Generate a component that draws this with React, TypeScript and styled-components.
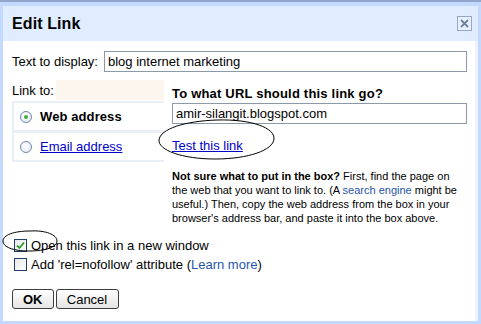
import React from 'react'
import styled, { createGlobalStyle } from 'styled-components'

const Global = createGlobalStyle`
  html, body { margin: 0; padding: 0; }
  body {
    font-family: 'Liberation Sans', Arial, sans-serif;
    font-size: 13px;
    color: #000;
    background: #c3d9ff;
  }
`

const Page = styled.div`
  width: 481px;
  height: 324px;
  box-sizing: border-box;
  background: #c3d9ff;
  border-top: 2px solid #8fa6c9;
  padding: 4px 4px 3px 3px;
  display: flex;
`

const Dialog = styled.div`
  flex: 1;
  display: flex;
  flex-direction: column;
  background: #fff;
  position: relative;
`

const TitleBar = styled.div`
  height: 35px;
  background: #e0ecff;
  display: flex;
  align-items: center;
  justify-content: space-between;
  padding: 0 6px 0 9px;
`

const Title = styled.h1`
  margin: 0;
  font-size: 16px;
  font-weight: bold;
  letter-spacing: 0.1px;
`

const CloseBox = styled.div`
  width: 13px;
  height: 13px;
  border: 1px solid #94a9c9;
  background: #e8f0ff;
  display: flex;
  align-items: center;
  justify-content: center;
`

const Body = styled.div`
  flex: 1;
  padding: 10px 8px 0 9px;
  border-right: 3px solid #edf3ff;
  position: relative;
`

const FieldRow = styled.div`
  display: flex;
  align-items: center;
  gap: 6px;
`

const Label = styled.span`
  white-space: nowrap;
`

const TextInput = styled.div<{ w: number; gapTop?: number }>`
  width: ${p => p.w}px;
  height: 21px;
  margin-top: ${p => p.gapTop ?? 0}px;
  box-sizing: border-box;
  border: 1px solid #8c9aa8;
  padding: 0 3px;
  display: flex;
  align-items: center;
  font-size: 13px;
  background: #fff;
`

const LinkSection = styled.div`
  display: grid;
  grid-template-columns: 152px 1fr;
  column-gap: 8px;
  margin-top: 8px;
`

const LeftCol = styled.div`
  display: flex;
  flex-direction: column;
`

const LinkHead = styled.div`
  display: flex;
  height: 20px;
  align-items: center;
`

const Peach = styled.div`
  flex: 1;
  align-self: stretch;
  margin-left: 2px;
  background: #fdf6ef;
`

const TabPanel = styled.div`
  display: flex;
  flex-direction: column;
  gap: 3px;
  background: #eaeff7;
  padding: 2px 0 2px 2px;
  margin-top: 1px;
`

const TabRow = styled.div`
  height: 27px;
  background: #fff;
  display: flex;
  align-items: center;
  gap: 8px;
  padding-left: 6px;
`

const Radio = styled.span<{ on?: boolean }>`
  width: 12px;
  height: 12px;
  box-sizing: border-box;
  border-radius: 50%;
  border: 1px solid #6f87a8;
  background: radial-gradient(circle at 40% 40%, #ffffff, #dfe6ee);
  display: flex;
  align-items: center;
  justify-content: center;
  &::after {
    content: '';
    width: 4px;
    height: 4px;
    border-radius: 50%;
    background: ${p => (p.on ? '#3fae3a' : 'transparent')};
  }
`

const BoldTab = styled.span`
  font-weight: bold;
  letter-spacing: 0.1px;
`

const NavyLink = styled.a`
  color: #0000cc;
  text-decoration: underline;
`

const RightCol = styled.div`
  display: flex;
  flex-direction: column;
  padding-top: 6px;
`

const Question = styled.div`
  font-weight: bold;
  letter-spacing: 0.2px;
  line-height: 16px;
`

const TestRow = styled.div`
  margin-top: 14px;
  position: relative;
  height: 16px;
  line-height: 16px;
`

const Help = styled.p`
  margin: 15px 0 0;
  font-size: 11px;
  line-height: 14px;
  width: 290px;
`

const BlueLink = styled.a`
  color: #1f55a8;
  text-decoration: none;
`

const Checks = styled.div`
  display: flex;
  flex-direction: column;
  gap: 6px;
  margin-top: 14px;
  padding-left: 2px;
`

const CheckRow = styled.label`
  display: flex;
  align-items: center;
  gap: 4px;
  line-height: 13px;
  position: relative;
`

const Box = styled.span`
  width: 13px;
  height: 13px;
  box-sizing: border-box;
  border: 1px solid #1c3f6e;
  background: linear-gradient(135deg, #e8e8e8, #fff);
  display: flex;
  align-items: center;
  justify-content: center;
`

const Buttons = styled.div`
  display: flex;
  gap: 2px;
  margin-top: 18px;
`

const Button = styled.button<{ primary?: boolean }>`
  height: 20px;
  padding: 0 ${p => (p.primary ? '10px' : '8px')};
  min-width: ${p => (p.primary ? '41px' : '63px')};
  border: 1px solid #3d3d3d;
  border-radius: 3px;
  background: linear-gradient(#ffffff, #e4e4e4);
  font-family: 'Liberation Sans', Arial, sans-serif;
  font-size: 13px;
  font-weight: ${p => (p.primary ? 'bold' : 'normal')};
  color: #000;
`

const Ring = styled.svg<{ l: number; t: number }>`
  position: absolute;
  left: ${p => p.l}px;
  top: ${p => p.t}px;
  overflow: visible;
  pointer-events: none;
`

function CloseIcon() {
  return (
    <svg width="9" height="9" viewBox="0 0 9 9">
      <path d="M1 1 L8 8 M8 1 L1 8" stroke="#6f819c" strokeWidth="1.8" />
    </svg>
  )
}

function Tick() {
  return (
    <svg width="9" height="9" viewBox="0 0 9 9">
      <path d="M1 4.5 L3.5 7 L8 1.5" stroke="#2f9a2b" strokeWidth="1.8" fill="none" />
    </svg>
  )
}

export default function App() {
  return (
    <>
      <Global />
      <Page>
        <Dialog>
          <TitleBar>
            <Title>Edit Link</Title>
            <CloseBox><CloseIcon /></CloseBox>
          </TitleBar>
          <Body>
            <FieldRow>
              <Label>Text to display:</Label>
              <TextInput w={363}>blog internet marketing</TextInput>
            </FieldRow>

            <LinkSection>
              <LeftCol>
                <LinkHead>
                  <Label>Link to:</Label>
                  <Peach />
                </LinkHead>
                <TabPanel>
                  <TabRow>
                    <Radio on />
                    <BoldTab>Web address</BoldTab>
                  </TabRow>
                  <TabRow>
                    <Radio />
                    <NavyLink href="#">Email address</NavyLink>
                  </TabRow>
                </TabPanel>
              </LeftCol>

              <RightCol>
                <Question>To what URL should this link go?</Question>
                <TextInput w={295} gapTop={1}>amir-silangit.blogspot.com</TextInput>
                <TestRow>
                  <NavyLink href="#">Test this link</NavyLink>
                  <Ring l={-15} t={-19} width="119" height="41" viewBox="0 0 119 41">
                    <path
                      d="M60 1 C95 0 118 9 117 20 C116 31 92 40 58 40 C25 40 1 31 2 21 C3 10 28 2 60 1 Z"
                      fill="none"
                      stroke="#000"
                      strokeWidth="1"
                    />
                  </Ring>
                </TestRow>
                <Help>
                  <b>Not sure what to put in the box?</b> First, find the page on the web that you want
                  to link to. (A <BlueLink href="#">search engine</BlueLink> might be useful.) Then, copy
                  the web address from the box in your browser's address bar, and paste it into the box
                  above.
                </Help>
              </RightCol>
            </LinkSection>

            <Checks>
              <CheckRow>
                <Box><Tick /></Box>
                <span>Open this link in a new window</span>
                <Ring l={-12} t={-9} width="56" height="22" viewBox="0 0 56 22">
                  <path
                    d="M28 1 C44 0 55 5 55 11 C55 17 44 21 27 21 C11 21 1 17 1 11 C1 5 12 1 28 1 Z"
                    fill="none"
                    stroke="#000"
                    strokeWidth="1"
                  />
                </Ring>
              </CheckRow>
              <CheckRow>
                <Box />
                <span>
                  Add 'rel=nofollow' attribute (<BlueLink href="#">Learn more</BlueLink>)
                </span>
              </CheckRow>
            </Checks>

            <Buttons>
              <Button primary>OK</Button>
              <Button>Cancel</Button>
            </Buttons>
          </Body>
        </Dialog>
      </Page>
    </>
  )
}
